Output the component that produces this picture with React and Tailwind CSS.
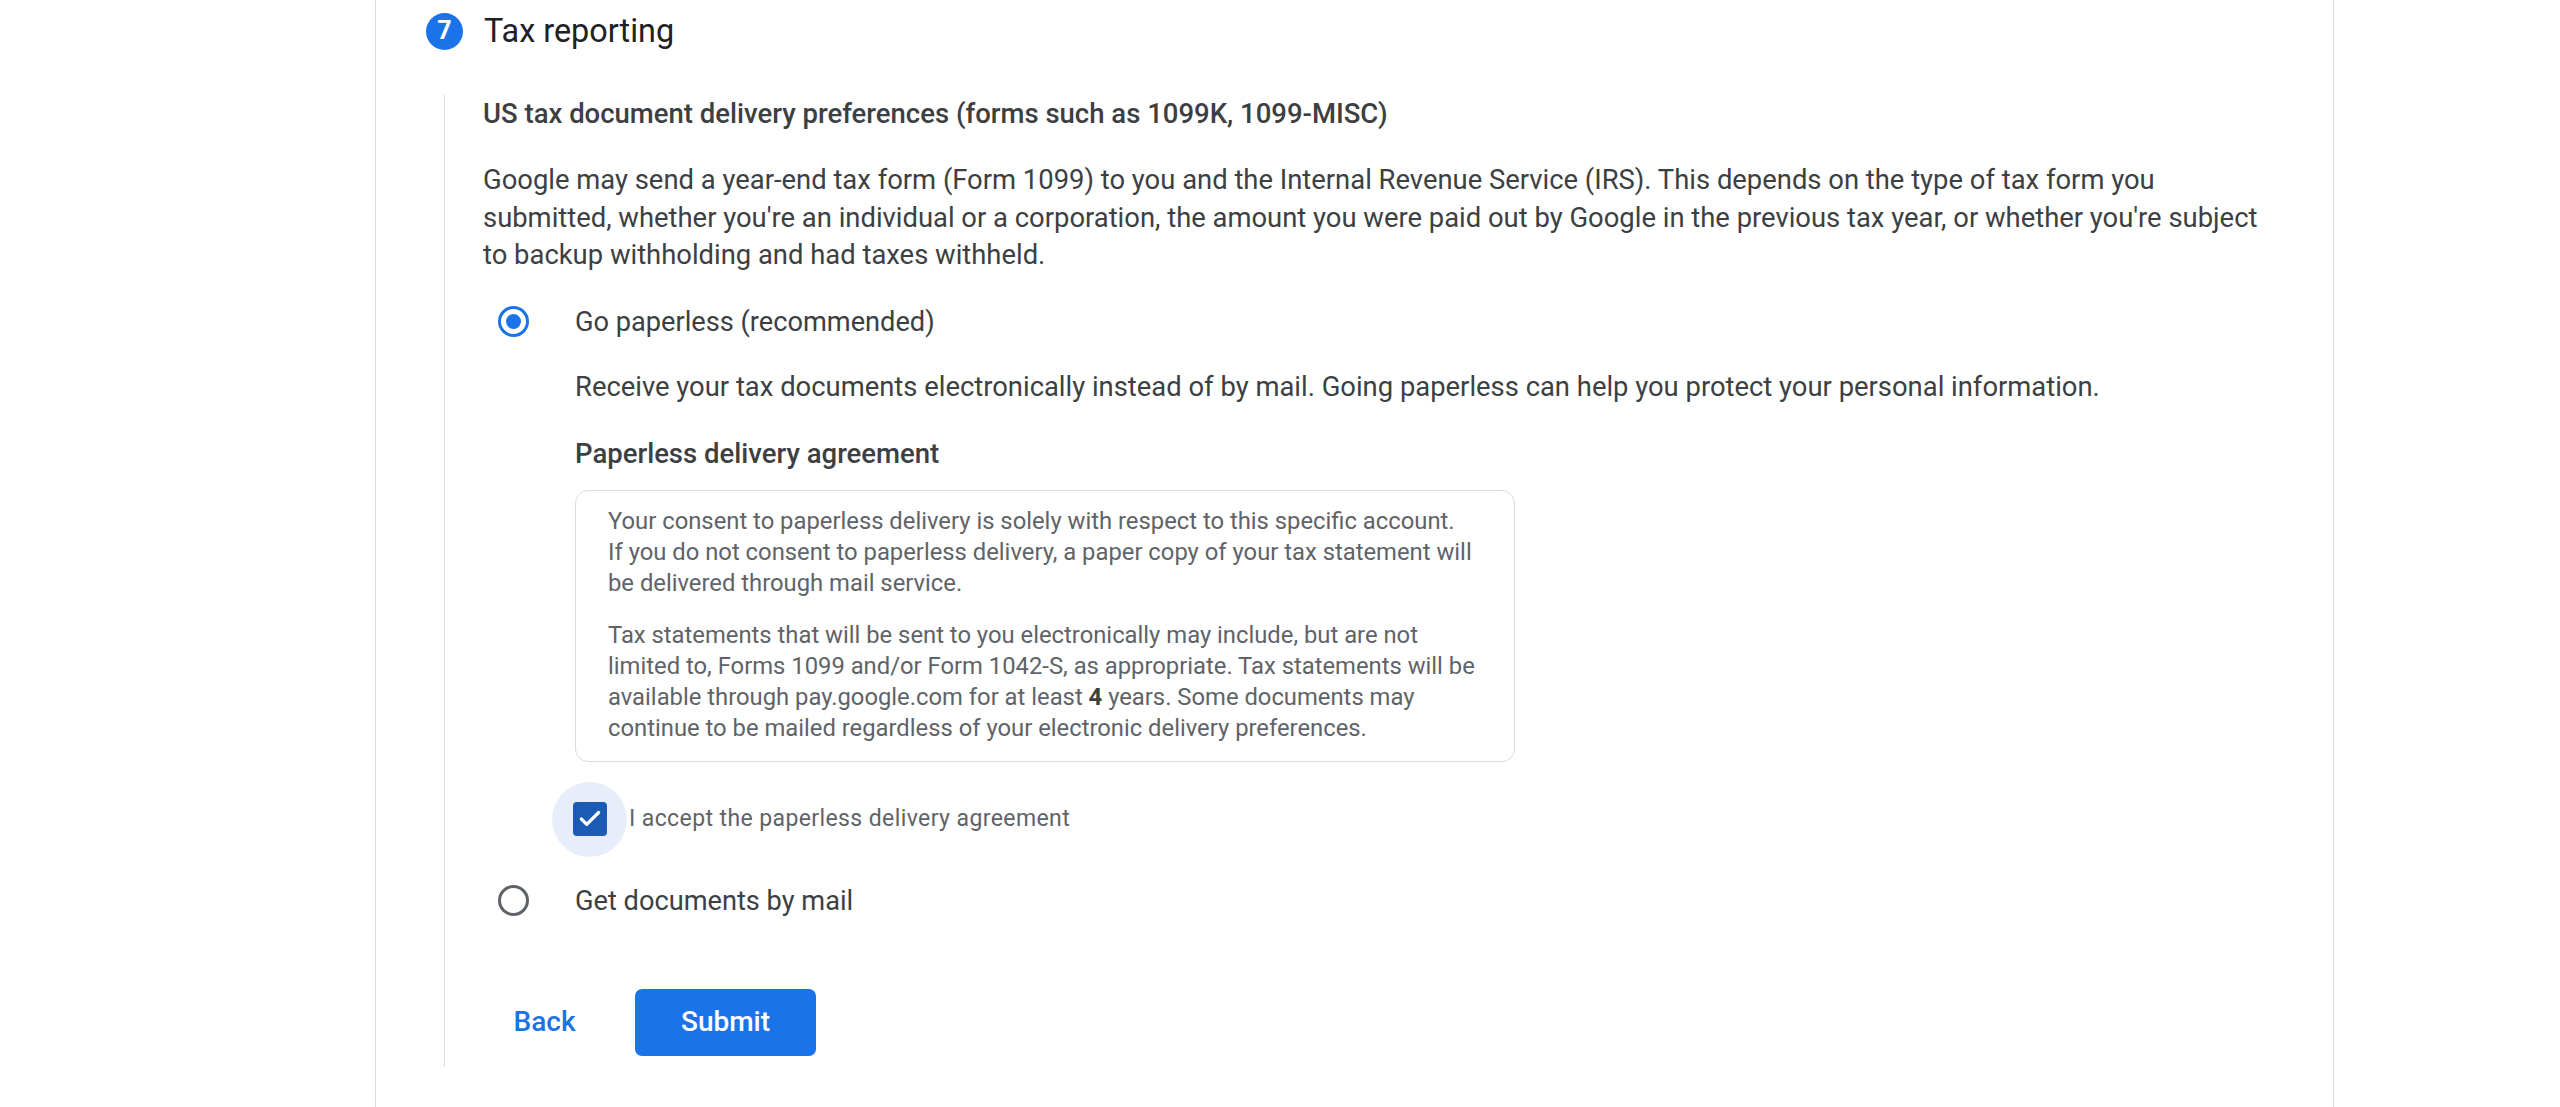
import { Check } from "lucide-react";

const Radio = ({ checked }) => (
  <div className="flex h-[64px] w-[60px] shrink-0 items-center justify-center">
    {checked ? (
      <div className="flex h-[31px] w-[31px] items-center justify-center rounded-full border-[3px] border-[#1a73e8]">
        <div className="h-[15px] w-[15px] rounded-full bg-[#1a73e8]" />
      </div>
    ) : (
      <div className="h-[31px] w-[31px] rounded-full border-[3px] border-[#5f6368]" />
    )}
  </div>
);

export default function App() {
  return (
    <div className="h-[1107px] w-full overflow-hidden bg-white font-[Roboto,sans-serif] text-[#3c4043]">
      <div className="ml-[375px] h-full w-[1959px] border-x border-[#dadce0]">
        <div className="flex h-[62px] items-center pl-[50px]">
          <div className="flex h-[37px] w-[37px] items-center justify-center rounded-full bg-[#1a73e8] text-[25px] font-bold text-white">
            7
          </div>
          <div className="ml-[21px] text-[32.4px] text-[#202124]">Tax reporting</div>
        </div>

        <div className="ml-[68px] mt-[33px] border-l border-[#dadce0] pb-[11px] pl-[38px]">
          <div className="text-[27.5px] font-medium leading-[38px]">
            US tax document delivery preferences (forms such as 1099K, 1099-MISC)
          </div>
          <p className="mt-[29px] w-[1795px] text-[27.4px] leading-[37.5px]">
            Google may send a year-end tax form (Form 1099) to you and the Internal Revenue
            Service (IRS). This depends on the type of tax form you submitted, whether you're an
            individual or a corporation, the amount you were paid out by Google in the previous
            tax year, or whether you're subject to backup withholding and had taxes withheld.
          </p>

          <div className="mt-[15px] flex items-center">
            <Radio checked />
            <span className="ml-[32px] text-[27.2px] leading-[38px]">Go paperless (recommended)</span>
          </div>

          <div className="ml-[92px]">
            <p className="mt-[14px] text-[27.4px] leading-[38px]">
              Receive your tax documents electronically instead of by mail. Going paperless can
              help you protect your personal information.
            </p>
            <div className="mt-[29px] text-[27.5px] font-medium leading-[38px]">
              Paperless delivery agreement
            </div>
            <div className="mt-[17px] w-[940px] rounded-[13px] border border-[#dadce0] pb-[17px] pl-[32px] pr-[16px] pt-[15px] text-[23.8px] leading-[31px] text-[#5f6368]">
              <p>
                Your consent to paperless delivery is solely with respect to this specific account.
                <br />
                If you do not consent to paperless delivery, a paper copy of your tax statement will
                <br />
                be delivered through mail service.
              </p>
              <p className="mt-[21px]">
                Tax statements that will be sent to you electronically may include, but are not
                <br />
                limited to, Forms 1099 and/or Form 1042-S, as appropriate. Tax statements will be
                <br />
                available through pay.google.com for at least{" "}
                <span className="font-bold text-[#3c4043]">4</span> years. Some documents may
                <br />
                continue to be mailed regardless of your electronic delivery preferences.
              </p>
            </div>
          </div>

          <div className="ml-[69px] mt-[20px] flex items-center">
            <div className="flex h-[75px] w-[75px] items-center justify-center rounded-full bg-[#e8eef9]">
              <div className="flex h-[34px] w-[34px] items-center justify-center rounded-[4px] bg-[#1b5ab5]">
                <Check size={26} strokeWidth={3} className="text-white" />
              </div>
            </div>
            <span className="ml-[2px] text-[23px] tracking-[0.4px] text-[#5f6368]">
              I accept the paperless delivery agreement
            </span>
          </div>

          <div className="mt-[12px] flex items-center">
            <Radio />
            <span className="ml-[32px] text-[27.2px] leading-[38px]">Get documents by mail</span>
          </div>

          <div className="mt-[56px] flex items-center gap-[29px]">
            <button className="h-[67px] w-[123px] text-[28px] font-medium text-[#1a73e8]">Back</button>
            <button className="h-[67px] w-[181px] rounded-[7px] bg-[#1a73e8] text-[28px] font-medium text-white">
              Submit
            </button>
          </div>
        </div>
      </div>
    </div>
  );
}
